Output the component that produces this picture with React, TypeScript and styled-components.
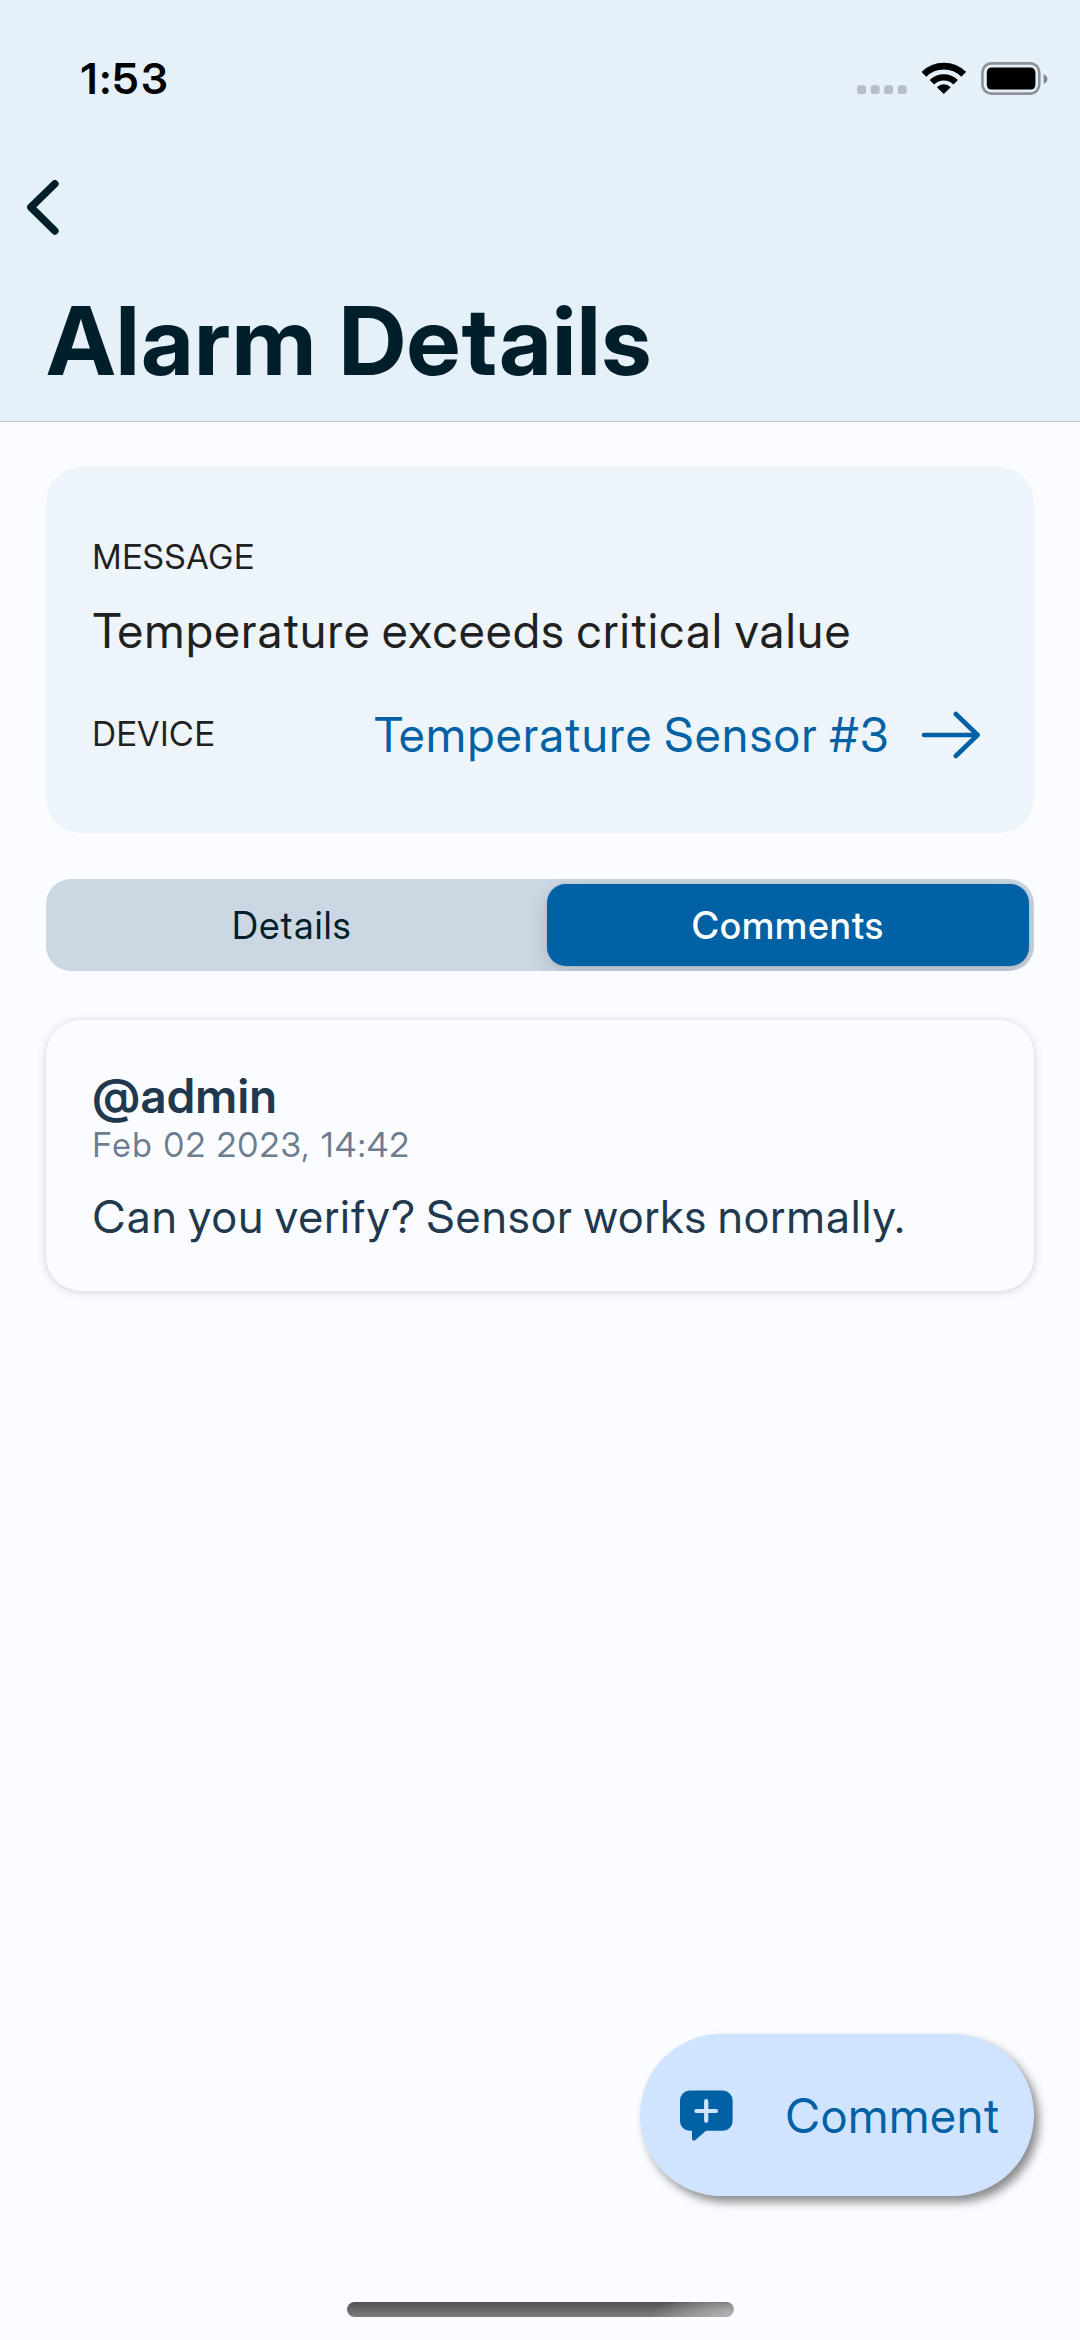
import React from "react";
import styled, { createGlobalStyle, css } from "styled-components";

const color = {
  page: "#fbfcff",
  header: "#e5f0f8",
  ink: "#001f2a",
  text: "#1f2121",
  primary: "#0061a4",
  primarySoft: "#d1e4ff",
  card: "#edf4fa",
  track: "#cbd7e3",
  slate: "#21394f",
  muted: "#6b7d8e",
};

const GlobalStyle = createGlobalStyle`
  * { box-sizing: border-box; }
  body {
    margin: 0;
    background: ${color.page};
    font-family: "Inter Display", Inter, "Liberation Sans", sans-serif;
    font-weight: 400;
  }
  svg { display: block; flex: none; }
`;

const Screen = styled.div`
  display: flex;
  flex-direction: column;
  width: 1080px;
  height: 2340px;
  overflow: hidden;
  background: ${color.page};
`;

const Header = styled.header`
  height: 422px;
  flex: none;
  background: ${color.header};
  border-bottom: 1px solid #c0c6ca;
`;

const StatusBar = styled.div`
  display: flex;
  justify-content: space-between;
  align-items: flex-start;
  height: 180px;
  padding: 52px 32px 0 81px;
`;

const Clock = styled.span`
  font-size: 43px;
  font-weight: 600;
  line-height: 52px;
  letter-spacing: 2.8px;
  color: #000;
`;

const StatusIcons = styled.div`
  display: flex;
  align-items: flex-end;
  gap: 15px;
  height: 43px;
`;

const BackButton = styled.button`
  display: block;
  height: 55px;
  margin: 0 0 48px 26px;
  padding: 0;
  border: 0;
  background: none;
`;

const Title = styled.h1`
  margin: 0 0 0 47px;
  font-size: 95px;
  font-weight: 700;
  line-height: 115px;
  letter-spacing: 1.3px;
  color: ${color.ink};
`;

const Content = styled.main`
  display: flex;
  flex-direction: column;
  flex: 1;
  padding: 45px 46px 0;
`;

const InfoCard = styled.section`
  height: 366px;
  padding: 68px 54px 0 46.5px;
  border-radius: 35px;
  background: ${color.card};
  color: ${color.text};
`;

const Label = styled.div`
  font-size: 33.5px;
  line-height: 44px;
  letter-spacing: 1.16px;
`;

const bodyLarge = css`
  font-size: 47.5px;
  line-height: 61px;
  white-space: nowrap;
`;

const Message = styled.div`
  ${bodyLarge}
  margin-top: 21px;
  letter-spacing: 1.56px;
  word-spacing: -2.4px;
`;

const DeviceRow = styled.div`
  display: flex;
  align-items: center;
  justify-content: space-between;
  margin-top: 43px;

  ${Label} { margin-bottom: 1px; }
`;

const DeviceLink = styled.a`
  ${bodyLarge}
  display: flex;
  align-items: center;
  gap: 31px;
  letter-spacing: 1.6px;
  word-spacing: -2px;
  color: ${color.primary};
`;

const Segmented = styled.div`
  display: grid;
  grid-template-columns: 1fr 1fr;
  gap: 14px;
  height: 92px;
  margin-top: 46px;
  padding: 5px;
  border-radius: 25px;
  background: ${color.track};
  overflow: hidden;
`;

const Segment = styled.button<{ $active?: boolean }>`
  height: 82px;
  padding: 0;
  border: 0;
  border-radius: 19px;
  background: none;
  font-family: inherit;
  font-size: 37.5px;
  font-weight: 400;
  line-height: 83px;
  letter-spacing: 1.3px;
  text-align: center;
  color: ${color.ink};

  ${(p) =>
    p.$active &&
    css`
      font-weight: 500;
      letter-spacing: 1.05px;
      color: #fff;
      background: ${color.primary};
      box-shadow: 0 8px 21px rgba(0, 20, 30, 0.14), 0 0 2px rgba(0, 20, 30, 0.2);
    `}
`;

const CommentCard = styled.article`
  height: 271px;
  margin-top: 49px;
  padding: 47px 46.5px 0;
  border-radius: 35px;
  background: ${color.page};
  box-shadow: 0 1px 9px rgba(20, 35, 40, 0.2);
  color: ${color.slate};
`;

const Author = styled.div`
  font-size: 47.5px;
  font-weight: 600;
  line-height: 57px;
  letter-spacing: 0.75px;
`;

const Timestamp = styled.div`
  margin-top: 1px;
  font-size: 33.5px;
  line-height: 40px;
  letter-spacing: 1.88px;
  color: ${color.muted};
`;

const CommentText = styled.div`
  margin-top: 24px;
  font-size: 45.5px;
  line-height: 55px;
  letter-spacing: 1.38px;
  word-spacing: -2.6px;
  white-space: nowrap;
`;

const Fab = styled.button`
  display: flex;
  align-items: center;
  justify-content: space-between;
  align-self: flex-end;
  width: 394px;
  height: 162px;
  margin-top: auto;
  padding: 0 34px 0 39px;
  border: 0;
  border-radius: 81px;
  background: ${color.primarySoft};
  box-shadow: 5px 6px 10px rgba(0, 0, 0, 0.45);
  color: ${color.primary};
`;

const FabLabel = styled.span`
  font-family: "Inter Display", Inter, sans-serif;
  font-size: 47.5px;
  line-height: 57px;
  letter-spacing: 1.17px;
`;

const HomeArea = styled.footer`
  flex: none;
  height: 144px;
  padding-top: 106px;
`;

const HomeIndicator = styled.div`
  width: 387px;
  height: 15px;
  margin: 0 auto;
  border-radius: 8px;
  background:
    radial-gradient(ellipse 84px 26px at 100% 100%, #adafb1 15%, rgba(173, 175, 177, 0) 100%),
    linear-gradient(#505355, #7b7d7f);
`;

const SignalDots = () => (
  <svg width="50" height="10" viewBox="0 0 50 10" fill="#b7bec5">
    {[0, 13.6, 27, 40.6].map((x) => (
      <rect key={x} x={x + 0.2} y="0.2" width="8.8" height="8.8" rx="2.6" />
    ))}
  </svg>
);

const WifiIcon = () => (
  <svg width="44" height="33" viewBox="0 0 44 33">
    <g fill="none" stroke="#000">
      <path d="M1.9 12.3a28.1 28.1 0 0 1 39.8 0" strokeWidth="6.8" />
      <path d="M9.9 20.3a16.9 16.9 0 0 1 23.8 0" strokeWidth="6.3" />
    </g>
    <path d="M21.8 32.1l-6.9-6.9a9.8 9.8 0 0 1 13.8 0z" />
  </svg>
);

const BatteryIcon = () => (
  <svg width="67" height="33" viewBox="0 0 67 33">
    <rect x="1.4" y="1.4" width="56.9" height="30.2" rx="9" fill="none" stroke="#8c9298" strokeWidth="2.6" />
    <rect x="5.8" y="5.6" width="48.6" height="22" rx="4.6" />
    <path d="M62.6 12.2c2.2.6 3.8 2.3 3.8 4.8s-1.6 4.2-3.8 4.8z" fill="#7f858a" />
  </svg>
);

const ChevronIcon = () => (
  <svg width="34" height="55" viewBox="0 0 34 55" fill="none" stroke={color.ink} strokeWidth="7.6" strokeLinecap="round" strokeLinejoin="round">
    <path d="M28.8 3.9L4.9 27.3l23.9 23.6" />
  </svg>
);

const ArrowIcon = () => (
  <svg width="59" height="50" viewBox="0 0 59 50" fill="none" stroke={color.primary} strokeWidth="4.6" strokeLinecap="round" strokeLinejoin="round">
    <path d="M3 25h53.6M34.8 4l21.8 21-21.8 21" />
  </svg>
);

const CommentPlusIcon = () => (
  <svg width="54" height="51" viewBox="0 0 54 51">
    <path
      fill={color.primary}
      d="M10.8.6h33a9.8 9.8 0 0 1 9.8 9.8V31a9.8 9.8 0 0 1-9.8 9.8H27L16.4 50c-1.6 1.2-3.4.6-3.4-1.4v-7.8h-2.2A9.8 9.8 0 0 1 1 31V10.400A9.8 9.8 0 0 1 10.800.6z"
    />
    <path d="M27.200 11.200v19.600M17.400 21H37" stroke={color.primarySoft} strokeWidth="4.200" strokeLinecap="round" />
  </svg>
);

export default function App() {
  return (
    <Screen>
      <GlobalStyle />
      <Header>
        <StatusBar>
          <Clock>1:53</Clock>
          <StatusIcons>
            <SignalDots />
            <WifiIcon />
            <BatteryIcon />
          </StatusIcons>
        </StatusBar>
        <BackButton aria-label="Back">
          <ChevronIcon />
        </BackButton>
        <Title>Alarm Details</Title>
      </Header>
      <Content>
        <InfoCard>
          <Label>MESSAGE</Label>
          <Message>Temperature exceeds critical value</Message>
          <DeviceRow>
            <Label>DEVICE</Label>
            <DeviceLink>
              Temperature Sensor #3
              <ArrowIcon />
            </DeviceLink>
          </DeviceRow>
        </InfoCard>
        <Segmented>
          <Segment>Details</Segment>
          <Segment $active>Comments</Segment>
        </Segmented>
        <CommentCard>
          <Author>@admin</Author>
          <Timestamp>Feb 02 2023, 14:42</Timestamp>
          <CommentText>Can you verify? Sensor works normally.</CommentText>
        </CommentCard>
        <Fab>
          <CommentPlusIcon />
          <FabLabel>Comment</FabLabel>
        </Fab>
      </Content>
      <HomeArea>
        <HomeIndicator />
      </HomeArea>
    </Screen>
  );
}
